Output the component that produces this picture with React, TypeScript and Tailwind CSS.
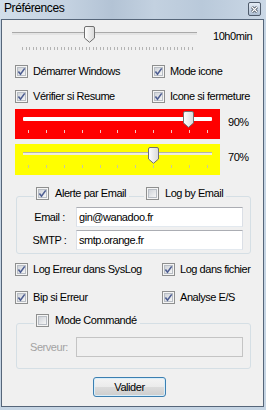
import React from "react";

function Check({ checked }: { checked?: boolean }) {
  return (
    <svg width="13" height="13" viewBox="0 0 13 13" className="shrink-0">
      <defs>
        <linearGradient id="cbIn" x1="0" y1="0" x2="1" y2="1">
          <stop offset="0" stopColor="#cdd1d7" />
          <stop offset="1" stopColor="#f8f8f8" />
        </linearGradient>
      </defs>
      <rect x="0.5" y="0.5" width="12" height="12" fill="#f5f5f5" stroke="#8e8f8f" />
      <rect x="2.5" y="2.5" width="8" height="8" fill="url(#cbIn)" stroke="#b9bec5" />
      {checked && <path d="M3.4 6.4 L5.5 9.2 L9.7 3.4" fill="none" stroke="#4e5e92" strokeWidth="1.6" />}
    </svg>
  );
}

function Thumb() {
  return (
    <svg width="11" height="17" viewBox="0 0 11 17">
      <defs>
        <linearGradient id="thumbG" x1="0" y1="0" x2="1" y2="0">
          <stop offset="0" stopColor="#ffffff" />
          <stop offset="1" stopColor="#d9d9d9" />
        </linearGradient>
      </defs>
      <path d="M0.5 2 Q0.5 0.5 2 0.5 H9 Q10.5 0.5 10.5 2 V12 L5.5 16.3 L0.5 12 Z" fill="url(#thumbG)" stroke="#707070" />
    </svg>
  );
}

function CheckLabel({ checked, children }: { checked?: boolean; children: React.ReactNode }) {
  return (
    <label className="flex items-center gap-[5px] whitespace-nowrap">
      <Check checked={checked} />
      <span>{children}</span>
    </label>
  );
}

function Ticks({ count, color }: { count: number; color: string }) {
  return (
    <>
      {Array.from({ length: count }).map((_, i) => (
        <div key={i} className="w-px h-full" style={{ background: color }} />
      ))}
    </>
  );
}

export default function App() {
  return (
    <div className="w-[266px] h-[410px] bg-[#c6d5e4] flex flex-col overflow-hidden font-['Liberation_Sans',Arial,sans-serif] text-[11px] tracking-[-0.45px] text-black">
      {/* title bar */}
      <div className="h-[19px] shrink-0 flex items-start justify-between pl-[4px] pr-[5px] bg-[linear-gradient(90deg,#d2deea_0%,#c4d2e1_25%,#b3c3d5_42%,#c3d1e0_58%,#b9c9da_76%,#cbd8e6_100%)]">
        <span className="pt-[1px] text-[12px] leading-[14px] tracking-[-0.4px]">Préférences</span>
        <div className="mt-[2px] w-[13px] h-[14px] rounded-[2px] border border-[#4f5b6b] bg-[linear-gradient(#e4ecf5,#aebfd3)] flex items-center justify-center">
          <svg width="7" height="7" viewBox="0 0 7 7">
            <path d="M1 1 L6 6 M6 1 L1 6" stroke="#3a4452" strokeWidth="2.6" />
            <path d="M1 1 L6 6 M6 1 L1 6" stroke="#ffffff" strokeWidth="1.2" />
          </svg>
        </div>
      </div>

      {/* client area */}
      <div className="ml-[1px] w-[263px] h-[388px] shrink-0 border border-[#56667a] bg-[#f0f0f0] flex flex-col pt-[6px]">
        {/* time slider */}
        <div className="flex items-start pl-[10px]">
          <div className="relative w-[185px] h-[24px]">
            <div className="absolute left-0 right-0 top-[6px] h-[3px] border-t border-[#a9a9a9] bg-[#e4e4e4]" />
            <div className="absolute left-[72px] top-0">
              <Thumb />
            </div>
            <div className="absolute left-[10px] w-[171px] top-[21px] h-[3px] flex justify-between">
              <Ticks count={49} color="#b4b4b4" />
            </div>
          </div>
          <span className="ml-[16px] mt-[3px] leading-[14px]">10h0min</span>
        </div>

        {/* options */}
        <div className="mt-[9px] h-[24px] flex items-center pl-[13px]">
          <div className="w-[137px]">
            <CheckLabel checked>Démarrer Windows</CheckLabel>
          </div>
          <CheckLabel checked>Mode icone</CheckLabel>
        </div>
        <div className="mt-[1px] h-[24px] flex items-center pl-[13px]">
          <div className="w-[137px]">
            <CheckLabel checked>Vérifier si Resume</CheckLabel>
          </div>
          <CheckLabel checked>Icone si fermeture</CheckLabel>
        </div>

        {/* red threshold */}
        <div className="mt-[1px] flex items-start pl-[13px]">
          <div className="relative w-[205px] h-[30px] bg-[#ff0000]">
            <div className="absolute left-[8px] w-[189px] top-[8px] h-[4px] bg-white rounded-[1px]" />
            <div className="absolute left-[168px] top-[2px]">
              <Thumb />
            </div>
            <div className="absolute left-[13px] w-[180px] top-[21px] h-[3px] flex justify-between">
              <Ticks count={11} color="#f4c4c4" />
            </div>
          </div>
          <span className="ml-[8px] mt-[6px] leading-[14px]">90%</span>
        </div>

        {/* yellow threshold */}
        <div className="mt-[5px] flex items-start pl-[13px]">
          <div className="relative w-[205px] h-[31px] bg-[#ffff00]">
            <div className="absolute left-[8px] w-[189px] top-[8px] h-[3px] border-t border-[#b4b4a8] bg-[#eeeee0]" />
            <div className="absolute left-[133px] top-[3px]">
              <Thumb />
            </div>
            <div className="absolute left-[13px] w-[180px] top-[21px] h-[3px] flex justify-between">
              <Ticks count={11} color="#c8c8a0" />
            </div>
          </div>
          <span className="ml-[8px] mt-[6px] leading-[14px]">70%</span>
        </div>

        {/* email group */}
        <div className="relative mt-[21px] ml-[14px] w-[235px] border border-[#d5dfe5] rounded-[3px] pt-[10px] pb-[3px] flex flex-col gap-[3px]">
          <div className="absolute top-[-10px] left-[17px] h-[13px] flex items-center bg-[#f0f0f0] pl-[2px] pr-[3px]">
            <label className="flex items-center gap-[6px] whitespace-nowrap">
              <Check checked />
              <span>Alerte par Email</span>
            </label>
          </div>
          <div className="absolute top-[-10px] left-[127px] h-[13px] flex items-center bg-[#f0f0f0] pl-[2px] pr-[3px]">
            <label className="flex items-center gap-[6px] whitespace-nowrap">
              <Check />
              <span>Log by Email</span>
            </label>
          </div>
          <div className="flex items-center">
            <span className="w-[59px] pl-[6px] text-center">Email :</span>
            <div className="w-[167px] h-[20px] border border-[#abadb3] border-x-[#dbdfe6] border-b-[#e3e9ef] bg-white pl-[2px] leading-[18px]">
              gin@wanadoo.fr
            </div>
          </div>
          <div className="flex items-center">
            <span className="w-[59px] pl-[6px] text-center">SMTP :</span>
            <div className="w-[167px] h-[20px] border border-[#abadb3] border-x-[#dbdfe6] border-b-[#e3e9ef] bg-white pl-[2px] leading-[18px]">
              smtp.orange.fr
            </div>
          </div>
        </div>

        {/* logging */}
        <div className="mt-[3px] h-[24px] flex items-center pl-[13px]">
          <div className="w-[147px]">
            <CheckLabel checked>Log Erreur dans SysLog</CheckLabel>
          </div>
          <CheckLabel checked>Log dans fichier</CheckLabel>
        </div>
        <div className="mt-[4px] h-[24px] flex items-center pl-[13px]">
          <div className="w-[147px]">
            <CheckLabel checked>Bip si Erreur</CheckLabel>
          </div>
          <CheckLabel checked>Analyse E/S</CheckLabel>
        </div>

        {/* command mode group */}
        <div className="relative mt-[14px] ml-[14px] w-[235px] border border-[#d5dfe5] rounded-[3px] pt-[13px] pb-[11px]">
          <div className="absolute top-[-10px] left-[17px] h-[13px] flex items-center bg-[#f0f0f0] pl-[2px] pr-[3px]">
            <label className="flex items-center gap-[6px] whitespace-nowrap">
              <Check />
              <span>Mode Commandé</span>
            </label>
          </div>
          <div className="flex items-center">
            <span className="w-[59px] pl-[13px] text-[#a3a3a3]">Serveur:</span>
            <div className="w-[167px] h-[20px] border border-[#c4c4c4] bg-[#f0f0f0]" />
          </div>
        </div>

        {/* submit */}
        <button className="mt-[8px] ml-[91px] w-[73px] h-[20px] rounded-[3px] border border-[#3c7fb1] shadow-[inset_0_0_0_1px_#d8eefa] bg-[linear-gradient(#f4f4f4_0%,#ebebeb_50%,#dcdcdc_50%,#cdcdcd_100%)] leading-[18px] text-center">
          Valider
        </button>
      </div>
    </div>
  );
}
